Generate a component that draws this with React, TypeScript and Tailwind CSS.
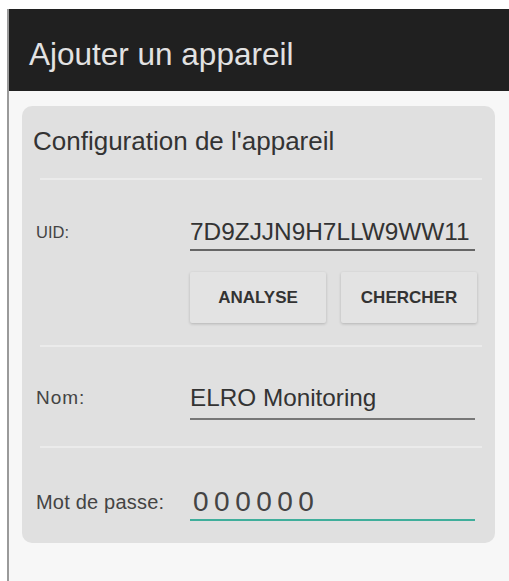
import React from "react";

const Divider = () => <div className="ml-[18px] mr-[13px] h-[2px] bg-[#ebebeb]" />;

const App: React.FC = () => {
  return (
    <div className="w-[509px] h-[581px] bg-white pt-[9px] pl-[7px] overflow-hidden font-['Liberation_Sans',Arial,sans-serif]">
      <div className="h-full border-l-2 border-[#9a9a9a] bg-[#f7f7f7] flex flex-col">
        <div className="h-[82px] bg-[#202020] flex items-center pl-[20px] pt-[8px]">
          <h1 className="text-[31.5px] leading-[36px] text-[#e2e2e2]">Ajouter un appareil</h1>
        </div>
        <div className="pl-[13px] pr-[14px] pt-[15px]">
          <div className="rounded-[10px] bg-[#e0e0e0] pb-[22px]">
            <div className="pl-[11px] pt-[21px] pb-[23px] text-[26px] leading-[28px] text-[#333]">
              Configuration de l'appareil
            </div>
            <Divider />

            <div className="flex items-start pl-[14px] pr-[20px] pt-[37px]">
              <span className="w-[154px] h-[30px] leading-[30px] text-[16.5px] text-[#444]">UID:</span>
              <div className="flex-1 border-b-2 border-[#666] pb-[2px] text-[24.4px] leading-[30px] text-[#333]">
                7D9ZJJN9H7LLW9WW11
              </div>
            </div>
            <div className="flex gap-[15px] pl-[168px] pr-[18px] pt-[21px] pb-[22px]">
              <button className="flex-1 h-[51px] bg-[#e3e3e3] shadow-[0_1px_3px_rgba(0,0,0,0.2)] rounded-[2px] text-[17px] font-bold text-[#333]">
                ANALYSE
              </button>
              <button className="flex-1 h-[51px] bg-[#e3e3e3] shadow-[0_1px_3px_rgba(0,0,0,0.2)] rounded-[2px] text-[17px] font-bold text-[#333]">
                CHERCHER
              </button>
            </div>
            <Divider />

            <div className="flex items-start pl-[14px] pr-[20px] pt-[36px] pb-[26px]">
              <span className="w-[154px] h-[30px] leading-[30px] text-[19px] tracking-[1px] text-[#444]">Nom:</span>
              <div className="flex-1 border-b-2 border-[#777] pb-[5px] text-[24.3px] leading-[30px] text-[#333]">
                ELRO Monitoring
              </div>
            </div>
            <Divider />

            <div className="flex items-start pl-[14px] pr-[20px] pt-[38px]">
              <span className="w-[154px] h-[32px] leading-[32px] text-[20px] tracking-[0.2px] text-[#444]">Mot de passe:</span>
              <div className="flex-1 border-b-2 border-[#3fae9b] pb-[1px] pl-[3px] text-[28px] leading-[32px] tracking-[5.5px] text-[#444]">
                000000
              </div>
            </div>
          </div>
        </div>
      </div>
    </div>
  );
};

export default App;
